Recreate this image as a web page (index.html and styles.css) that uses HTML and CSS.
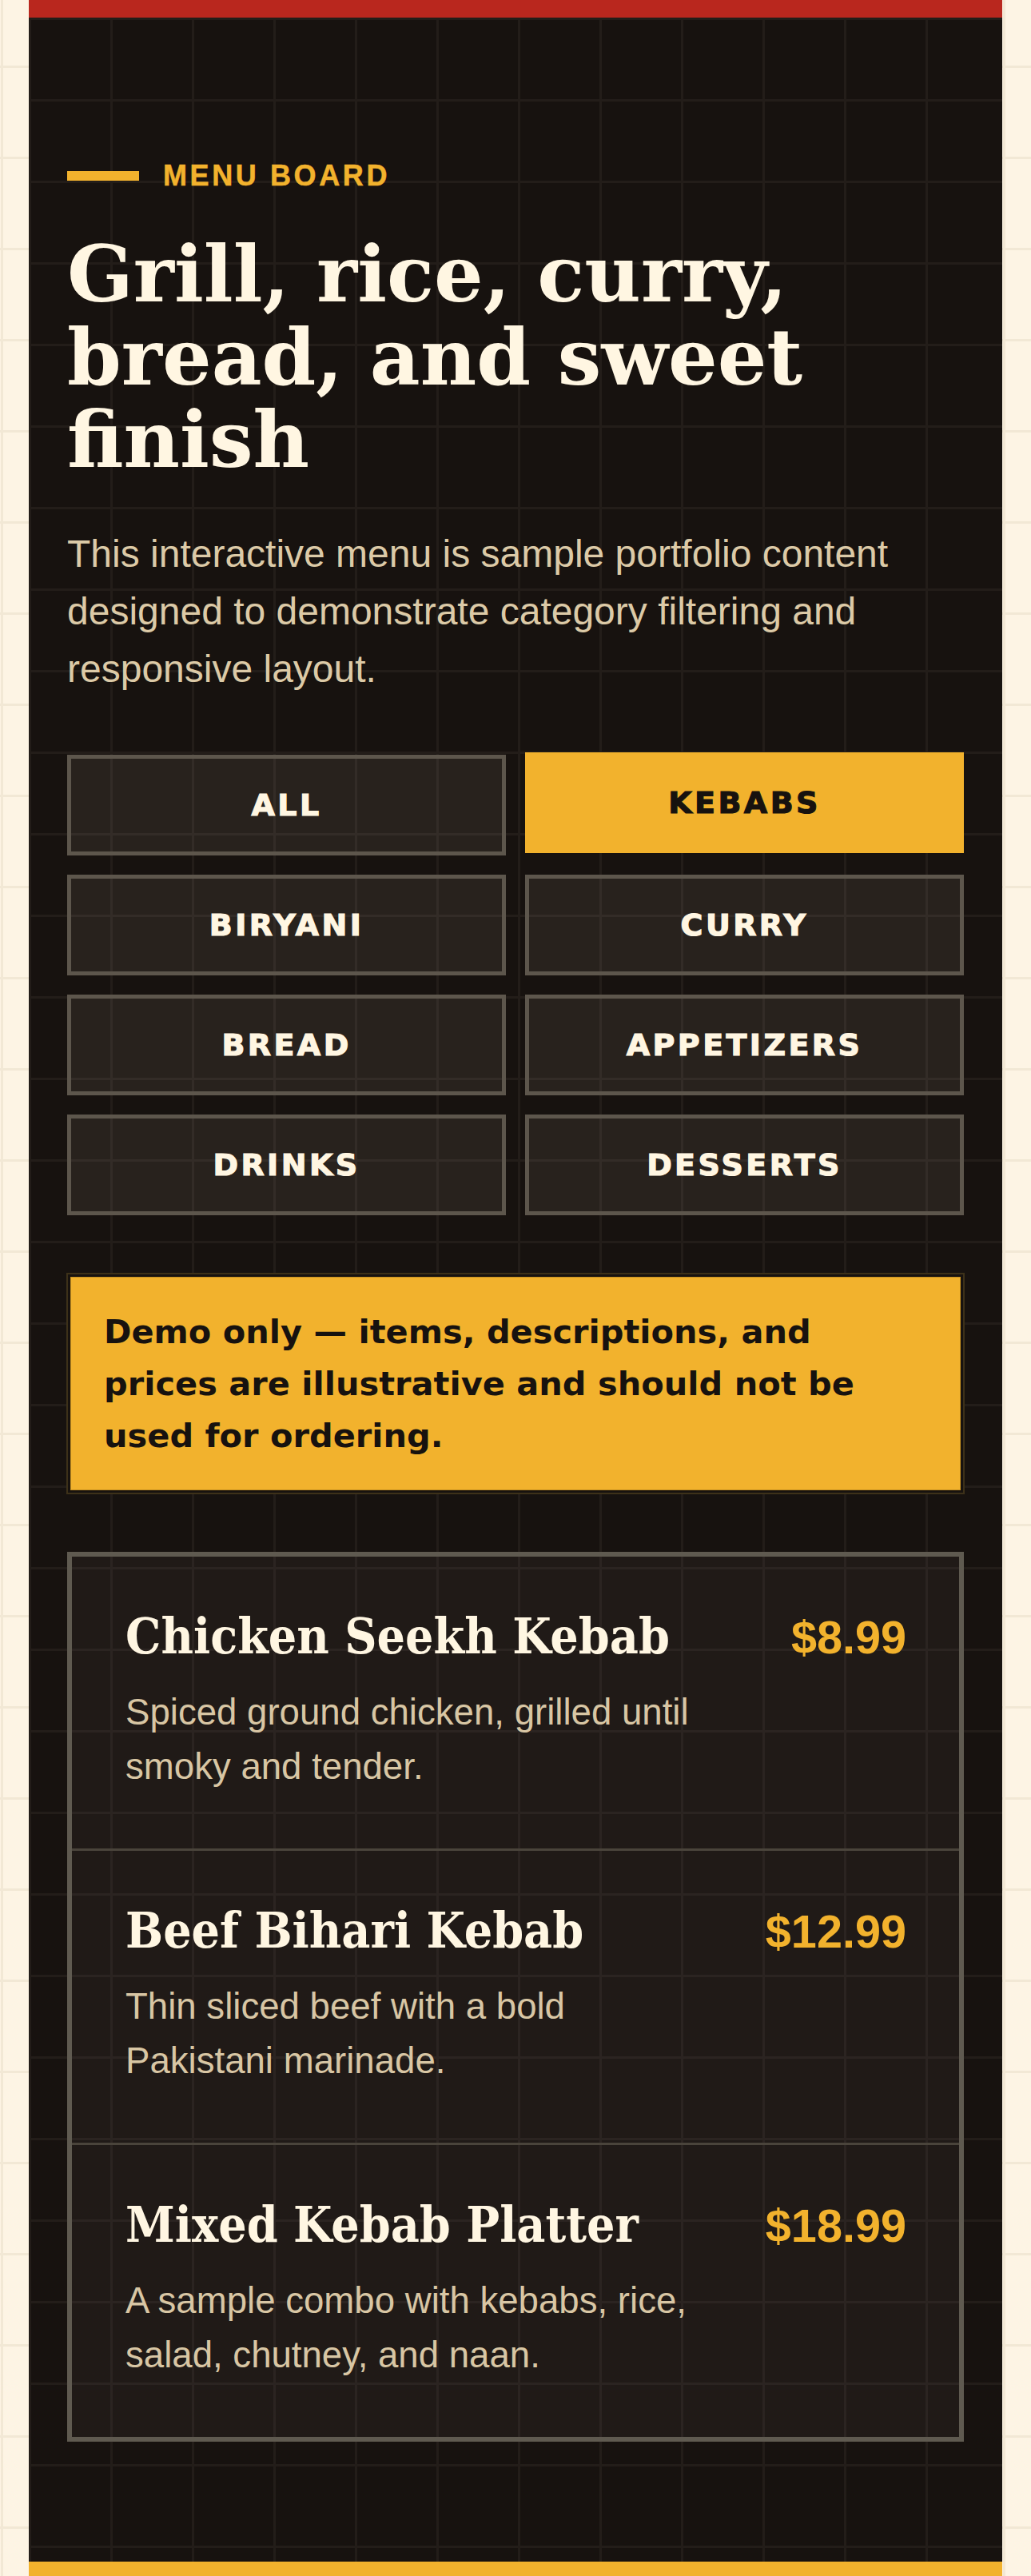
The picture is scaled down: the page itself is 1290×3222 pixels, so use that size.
FILE: index.html
```html
<!DOCTYPE html>
<html lang="en">
<head>
<meta charset="utf-8">
<title>Menu Board</title>
<link rel="stylesheet" href="styles.css">
</head>
<body>
<main class="board">
  <header class="hero">
    <div class="eyebrow"><span class="eyebrow-bar"></span><span class="eyebrow-text">Menu board</span></div>
    <h1 class="title">Grill, rice, curry, bread, and sweet finish</h1>
    <p class="lede">This interactive menu is sample portfolio content designed to demonstrate category filtering and responsive layout.</p>
  </header>

  <nav class="filters">
    <button class="filter">All</button>
    <button class="filter is-active">Kebabs</button>
    <button class="filter">Biryani</button>
    <button class="filter">Curry</button>
    <button class="filter">Bread</button>
    <button class="filter">Appetizers</button>
    <button class="filter">Drinks</button>
    <button class="filter">Desserts</button>
  </nav>

  <div class="notice">Demo only — items, descriptions, and prices are illustrative and should not be used for ordering.</div>

  <ul class="menu-list">
    <li class="menu-item">
      <div class="item-head">
        <h2 class="item-name">Chicken Seekh Kebab</h2>
        <span class="item-price">$8.99</span>
      </div>
      <p class="item-desc">Spiced ground chicken, grilled until smoky and tender.</p>
    </li>
    <li class="menu-item">
      <div class="item-head">
        <h2 class="item-name">Beef Bihari Kebab</h2>
        <span class="item-price">$12.99</span>
      </div>
      <p class="item-desc">Thin sliced beef with a bold Pakistani marinade.</p>
    </li>
    <li class="menu-item">
      <div class="item-head">
        <h2 class="item-name">Mixed Kebab Platter</h2>
        <span class="item-price">$18.99</span>
      </div>
      <p class="item-desc">A sample combo with kebabs, rice, salad, chutney, and naan.</p>
    </li>
  </ul>
</main>
</body>
</html>
```

FILE: styles.css
```css
html, body {
  margin: 0;
  padding: 0;
}

body {
  display: flex;
  flex-direction: column;
  min-height: 100vh;
  padding: 0 36px;
  background-color: #fdf4e4;
  background-image:
    linear-gradient(to bottom, #f2e8d5 0, #f2e8d5 3px, transparent 3px),
    linear-gradient(to right, #f2e8d5 0, #f2e8d5 3px, transparent 3px);
  background-size: 114px 114px;
  background-position: 1px 82px;
  font-family: "Liberation Sans", Arial, sans-serif;
}

.board {
  flex: 1 0 auto;
  background-color: #17120f;
  background-image:
    linear-gradient(to bottom, #231d19 0, #231d19 3px, transparent 3px),
    linear-gradient(to right, #231d19 0, #231d19 3px, transparent 3px);
  background-size: 102px 102px;
  background-origin: padding-box;
  border-top: 22px solid #b9271e;
  border-bottom: 19px solid #f2b22d;
  padding: 180px 48px 150px;
}

/* hero */
.eyebrow {
  display: flex;
  align-items: center;
  gap: 30px;
  height: 36px;
}

.eyebrow-bar {
  width: 90px;
  height: 12px;
  background: #f2b22d;
}

.eyebrow-text {
  font-family: "Liberation Sans", Arial, sans-serif;
  font-weight: 700;
  font-size: 36px;
  line-height: 36px;
  letter-spacing: 0.1em;
  text-transform: uppercase;
  color: #f2b22d;
  -webkit-text-stroke: 0.5px currentColor;
}

.title {
  margin: 54px 0 0;
  font-family: "DejaVu Serif", Georgia, serif;
  font-weight: 700;
  font-size: 97px;
  line-height: 103.5px;
  color: #fff6e2;
}

.lede {
  margin: 54px 0 0;
  font-size: 48px;
  line-height: 72px;
  color: #dccaa7;
}

/* filters */
.filters {
  margin-top: 71px;
  display: grid;
  grid-template-columns: 1fr 1fr;
  gap: 24px;
}

.filter {
  appearance: none;
  -webkit-appearance: none;
  height: 126px;
  margin: 0;
  padding: 0;
  border: 5px solid #5d564c;
  border-radius: 0;
  background: rgba(255, 240, 220, 0.075);
  color: #fff6e2;
  font-family: "DejaVu Sans", Verdana, sans-serif;
  font-weight: 700;
  font-size: 38px;
  letter-spacing: 0.09em;
  text-transform: uppercase;
  -webkit-text-stroke: 1.2px currentColor;
}

.filter.is-active {
  background: #f2b22d;
  border-color: #f2b22d;
  color: #17120f;
  transform: translateY(-3px);
}

/* notice */
.notice {
  margin: 77px 4px 0;
  padding: 35px 41px;
  border: 1px solid #c99220;
  background: #f2b22d;
  box-shadow: 0 0 0 3px #17120f, 0 0 0 5px #3d3119;
  color: #17120f;
  font-family: "DejaVu Sans", Verdana, sans-serif;
  font-weight: 700;
  font-size: 41.5px;
  line-height: 65px;
}

/* menu list */
.menu-list {
  list-style: none;
  margin: 77px 0 0;
  padding: 0;
  border: 6px solid #5f5a50;
  background: rgba(255, 240, 220, 0.04);
}

.menu-item {
  padding: 60px 66px 68px 67px;
}

.menu-item + .menu-item {
  border-top: 3px solid #4a443b;
}

.item-head {
  display: flex;
  justify-content: space-between;
  align-items: baseline;
  gap: 32px;
}

.item-name {
  margin: 0;
  font-family: "DejaVu Serif Condensed", "DejaVu Serif", serif;
  font-stretch: condensed;
  font-weight: 700;
  font-size: 62px;
  line-height: 80px;
  color: #fff6e2;
}

.item-price {
  font-weight: 700;
  font-size: 57.6px;
  line-height: 80px;
  color: #f2b22d;
}

.item-desc {
  margin: 20px 0 0;
  max-width: 730px;
  font-size: 45.6px;
  line-height: 68px;
  color: #d8c6a4;
}
```
